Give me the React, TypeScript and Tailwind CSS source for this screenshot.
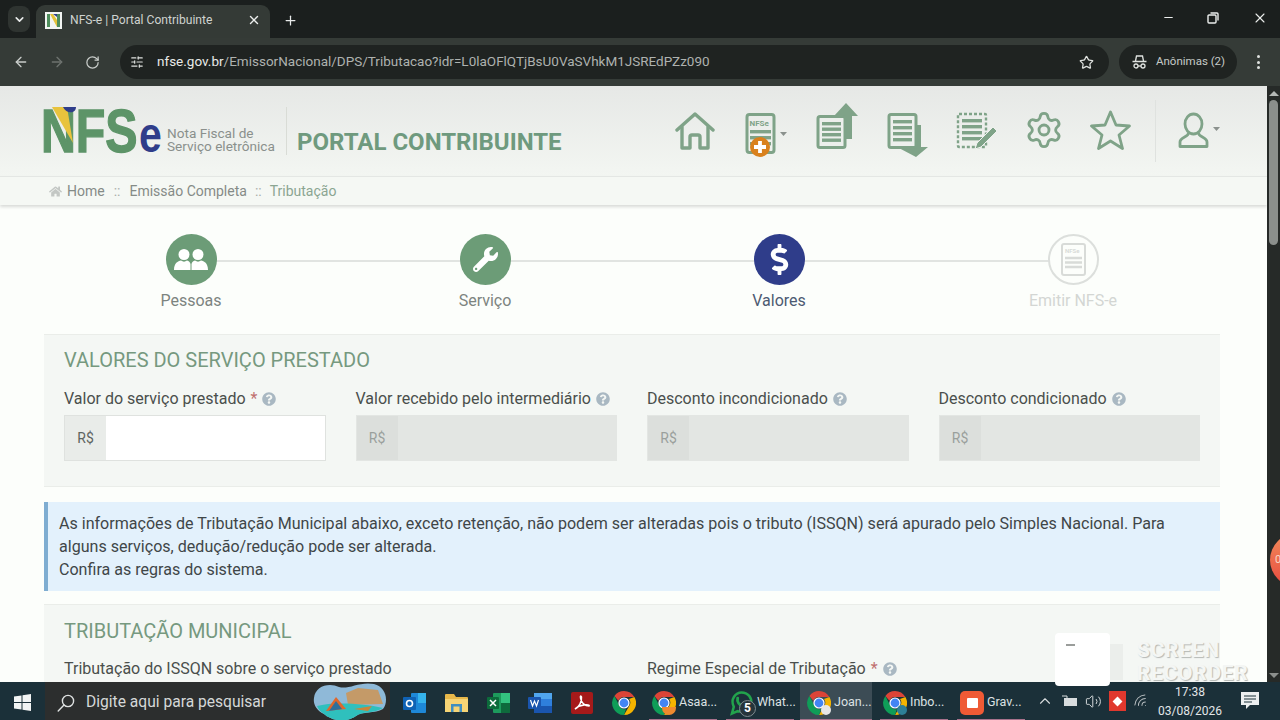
import { ChevronDown, X, Plus, Minus, ArrowLeft, ArrowRight, RotateCw, SlidersHorizontal, Star, Settings, ChevronUp, Volume2, Wifi } from "lucide-react";
import { FaDollarSign, FaHome, FaQuestionCircle, FaWrench } from "react-icons/fa";

const green = "#7fa388";

function Help() {
  return <FaQuestionCircle className="ml-[5px] inline-block h-[14px] w-[14px] text-[#a9b8c2]" />;
}

function Field({ label, required, enabled }: { label: string; required?: boolean; enabled?: boolean }) {
  return (
    <div>
      <div className="flex h-[24px] items-center text-[16px] text-[#4a4f4c]">
        {label}
        {required && <span className="ml-[5px] text-[#c0706f]">*</span>}
        <Help />
      </div>
      <div className={`mt-[4px] flex h-[46px] border ${enabled ? "border-[#dfe2df] bg-white" : "border-[#e3e6e3] bg-[#e3e6e3]"}`}>
        <div className={`flex w-[41px] items-center justify-center text-[14px] ${enabled ? "bg-[#e9ece9] text-[#5e6461]" : "bg-[#dcdfdc] text-[#9a9f9c]"}`}>R$</div>
      </div>
    </div>
  );
}

function Step({ label, state, children }: { label: string; state: "done" | "current" | "todo"; children: React.ReactNode }) {
  const circle =
    state === "done"
      ? "bg-[#6c9c77] text-white"
      : state === "current"
        ? "bg-[#2f3d8a] text-white"
        : "border-2 border-[#dcdfdc] bg-[#fcfefb]";
  const text = state === "done" ? "text-[#7c8480]" : state === "current" ? "text-[#4c5a72]" : "text-[#d3d6d3]";
  return (
    <div className="relative z-10 flex w-[294px] flex-col items-center">
      <div className={`flex h-[51px] w-[51px] items-center justify-center rounded-full ${circle}`}>{children}</div>
      <div className={`mt-[5px] text-[16px] leading-[22px] ${text}`}>{label}</div>
    </div>
  );
}

function DocLines({ x, y, w, n = 4, gap = 6 }: { x: number; y: number; w: number; n?: number; gap?: number }) {
  return (
    <>
      {Array.from({ length: n }).map((_, i) => (
        <rect key={i} x={x} y={y + i * gap} width={w} height={3.4} fill={green} />
      ))}
    </>
  );
}

function HeaderIcons() {
  return (
    <div className="ml-auto flex items-center">
      {/* home */}
      <svg width="40" height="60" viewBox="0 0 40 60" fill="none" stroke={green} strokeWidth="3.4" strokeLinejoin="round" strokeLinecap="round">
        <path d="M2 29 20 13 38 29" />
        <path d="M7 26V47H15V36a2 2 0 0 1 2-2h6a2 2 0 0 1 2 2V47H33V26" />
      </svg>
      {/* nfs-e new */}
      <svg className="ml-[30px]" width="45" height="60" viewBox="0 0 45 60" fill="none">
        <rect x="2" y="13.5" width="27" height="38" rx="2.5" stroke={green} strokeWidth="3" />
        <text x="4.5" y="25" fontSize="8" fontWeight="700" fontFamily="Roboto, sans-serif" fill={green}>NFSe</text>
        <DocLines x={5} y={29} w={21} n={3} gap={6} />
        <circle cx="15" cy="46" r="10" fill="#d9811d" />
        <path d="M15 40v12M9 46h12" stroke="#fff" strokeWidth="3.8" />
        <path d="M35 31h7l-3.5 4z" fill="#8b918d" />
      </svg>
      {/* send */}
      <svg className="ml-[26px]" width="42" height="60" viewBox="0 0 42 60" fill="none">
        <path d="M30 2 42 15H36V38H24V15H18z" fill={green} />
        <rect x="2" y="15.5" width="27" height="31" rx="2" fill="#ecefec" stroke={green} strokeWidth="3" />
        <DocLines x={6} y={21} w={19} n={4} gap={5.5} />
      </svg>
      {/* receive */}
      <svg className="ml-[29px]" width="42" height="60" viewBox="0 0 42 60" fill="none">
        <path d="M21 24H34V46H41L29 56 10 46H21z" fill={green} />
        <rect x="2" y="13.5" width="27" height="33" rx="2" fill="#edf0ed" stroke={green} strokeWidth="3" />
        <DocLines x={6} y={19} w={19} n={4} gap={6} />
      </svg>
      {/* edit */}
      <svg className="ml-[27px]" width="41" height="60" viewBox="0 0 41 60" fill="none">
        <rect x="2" y="13" width="28" height="33" rx="1" stroke={green} strokeWidth="2.4" strokeDasharray="3 2" />
        <DocLines x={6} y={18} w={20} n={4} gap={6} />
        <path d="M37 26 41 30 25 46 19 48 21 42z" fill={green} stroke="#eef1ee" strokeWidth="1" />
      </svg>
      <div className="ml-[27px] flex h-[60px] w-[40px] items-start pt-[9px]">
        <Settings size={40} strokeWidth={1.7} color={green} />
      </div>
      {/* favourites */}
      <svg className="ml-[26px]" width="41" height="60" viewBox="0 0 41 60" fill="none">
        <path d="M20.5 11 26 24 39.5 25 29 34 32.5 47.5 20.5 40 8.5 47.5 12 34 1.5 25 15 24z" stroke={green} strokeWidth="2.8" strokeLinejoin="round" />
      </svg>
      <div className="ml-[24px] h-[62px] w-px bg-[#dfe2df]" />
      {/* user */}
      <svg className="ml-[22px]" width="42" height="60" viewBox="0 0 42 60" fill="none" stroke={green} strokeWidth="2.8">
        <ellipse cx="15.5" cy="23" rx="8.5" ry="10" />
        <path d="M10.5 32C10.5 36 2 36 2 41V45.5H29V41C29 36 20.5 36 20.5 32" strokeLinejoin="round" />
        <path d="M35 26h7l-3.5 4z" fill="#8b918d" stroke="none" />
      </svg>
    </div>
  );
}

function Logo() {
  return (
    <div className="flex items-center">
      <svg className="overflow-visible" width="120" height="60" viewBox="0 0 120 60">
        <text transform="scale(0.78 1)" x="-4" y="51" fontFamily="'Liberation Sans', sans-serif" fontWeight="700" fontSize="62" fill="#5d9468" stroke="#5d9468" strokeWidth="1.4">NFS</text>
        <path d="M8 6H23L29 42z" fill="#e8c33d" />
        <path d="M19 6H32C32 13 22 13 19 6z" fill="#2f3d8a" />
        <text transform="scale(0.82 1)" x="116" y="51" fontFamily="'Liberation Sans', sans-serif" fontWeight="700" fontSize="50" fill="#2f3d8a">e</text>
      </svg>
      <div className="mt-[18px] ml-[3px] w-[118px] text-[13.6px] leading-[13.5px] whitespace-nowrap text-[#8a908c]">
        Nota Fiscal de
        <br />
        Serviço eletrônica
      </div>
      <div className="ml-[1px] h-[48px] w-px bg-[#d9dcd6]" />
      <div className="mt-[21px] ml-[10px] text-[24px] leading-[28px] font-bold text-[#6f9a7e]">PORTAL CONTRIBUINTE</div>
    </div>
  );
}

function Chrome({ size = 22, children }: { size?: number; children?: React.ReactNode }) {
  return (
    <div className="relative shrink-0" style={{ width: size, height: size }}>
      <svg width={size} height={size} viewBox="0 0 24 24">
        <path d="M12 0a12 12 0 0 1 10.4 6H12a6 6 0 0 0-5.6 3.8L2.4 5A12 12 0 0 1 12 0z" fill="#dc4437" />
        <path d="M22.4 6A12 12 0 0 1 12 24l5.2-9A6 6 0 0 0 17 8z" fill="#f4b400" />
        <path d="M12 24A12 12 0 0 1 2.4 5l4.8 9.5A6 6 0 0 0 14 18z" fill="#0f9d58" />
        <circle cx="12" cy="12" r="5.6" fill="#fff" />
        <circle cx="12" cy="12" r="4.4" fill="#4285f4" />
      </svg>
      {children}
    </div>
  );
}

function TaskItem({ label, width, margin, active, icon }: { label: string; width: string; margin: string; active?: boolean; icon: React.ReactNode }) {
  return (
    <div className={`relative flex h-full items-center gap-[3px] pt-[3px] ${width} ${margin} ${active ? "bg-[#3c4c55] pl-[7px]" : "pl-[3px]"}`}>
      {icon}
      <span className="text-[12.5px] text-[#dde2e4]">{label}</span>
      <div className="absolute right-0 bottom-0 left-0 h-[1.5px] bg-[#a8728c]" />
    </div>
  );
}

function Taskbar() {
  return (
    <div className="flex h-[38px] shrink-0 items-center bg-[#1b3039]">
      <div className="flex h-full w-[45px] items-center justify-center pt-[3px]">
        <svg width="17" height="17" viewBox="0 0 17 17" fill="#f2f4f4">
          <path d="M0 2.5 7.5 1.4V8H0zM8.5 1.3 17 0V8H8.5zM0 9H7.5V15.6L0 14.5zM8.5 9H17V17L8.5 15.7z" />
        </svg>
      </div>
      <div className="flex h-full w-[345px] items-center overflow-hidden bg-[#2c2e2e]">
        <svg className="mt-[3px] ml-[12px]" width="18" height="18" viewBox="0 0 18 18" fill="none" stroke="#dfe2e2" strokeWidth="1.4">
          <circle cx="11" cy="7" r="5.6" />
          <path d="M7 11 1.2 17" strokeLinecap="round" />
        </svg>
        <span className="mt-[3px] ml-[11px] text-[15.6px] text-[#d5d8d8]">Digite aqui para pesquisar</span>
        <svg className="ml-[46px]" width="76" height="38" viewBox="0 0 76 38">
          <path d="M2 16C3 4 17 0 27 5 36 8 48-1 62 2 74 5 77 19 71 27 63 32 50 29 44 34 34 41 20 39 12 32 4 28 1 22 2 16z" fill="#8fb9d8" />
          <path d="M34 11 46 6 66 8 71 22 36 23z" fill="#c49a68" />
          <path d="M5 24C20 20 50 21 71 26 62 32 50 29 44 34 34 41 20 39 12 32 8 29 6 27 5 24z" fill="#2fc0bd" />
          <path d="M14 29 24 15 34 27z" fill="#e0672c" />
          <path d="M17 29 24 19 30 27z" fill="#2f6f9c" />
          <path d="M42 27 60 24 56 29z" fill="#c9853a" />
        </svg>
      </div>
      <div className="ml-[3px] flex h-full items-center pt-[3px]">
        <div className="flex w-[42px] justify-center">
          <svg width="23" height="22" viewBox="0 0 23 22">
            <rect x="8" y="1" width="15" height="20" rx="1" fill="#1e88d8" />
            <rect x="15" y="1" width="8" height="10" fill="#35b3ec" />
            <rect x="0" y="5" width="13" height="13" rx="1" fill="#0f62b5" />
            <circle cx="6.5" cy="11.5" r="3" fill="none" stroke="#fff" strokeWidth="1.6" />
          </svg>
        </div>
        <div className="flex w-[42px] justify-center">
          <svg width="23" height="20" viewBox="0 0 23 20">
            <path d="M0 2a1 1 0 0 1 1-1H9L11 4H22a1 1 0 0 1 1 1V19H0z" fill="#e8b84a" />
            <rect x="0" y="6" width="23" height="13" fill="#f6d475" />
            <rect x="6" y="11" width="11" height="8" fill="#3f8ec0" />
            <rect x="8.5" y="13.5" width="6" height="5.5" fill="#f6d475" />
          </svg>
        </div>
        <div className="flex w-[42px] justify-center">
          <svg width="23" height="22" viewBox="0 0 23 22">
            <rect x="6" y="1" width="17" height="20" rx="1" fill="#1d9a5c" />
            <rect x="14" y="1" width="9" height="10" fill="#33c27f" />
            <rect x="14" y="11" width="9" height="10" fill="#0e6a3c" />
            <rect x="0" y="5" width="12" height="12" rx="1" fill="#0c6b3b" />
            <path d="M3 8 9 14M9 8 3 14" stroke="#fff" strokeWidth="1.5" />
          </svg>
        </div>
        <div className="flex w-[42px] justify-center">
          <svg width="24" height="22" viewBox="0 0 24 22">
            <rect x="6" y="1" width="18" height="20" rx="1" fill="#2f7fdc" />
            <rect x="6" y="1" width="18" height="6" fill="#51a6ee" />
            <rect x="6" y="14" width="18" height="7" fill="#1a55ae" />
            <rect x="0" y="5" width="13" height="12" rx="1" fill="#1a55ae" />
            <path d="M2.5 8 4.5 14 6.5 9 8.5 14 10.5 8" fill="none" stroke="#fff" strokeWidth="1.2" />
          </svg>
        </div>
        <div className="flex w-[42px] justify-center">
          <svg width="22" height="22" viewBox="0 0 22 22">
            <rect width="22" height="22" rx="2" fill="#a51a1a" />
            <path d="M4 17C8 15 11 10 10.5 5 10 3.5 9 4 9.5 6 10.5 11 14 14 18 14 19 13 16 12.5 13 13 9.5 13.5 6 15 4 17z" fill="none" stroke="#fff" strokeWidth="1.5" />
          </svg>
        </div>
        <div className="flex w-[42px] justify-center">
          <Chrome size={24} />
        </div>
      </div>
      <TaskItem label="Asaa..." width="w-[68px]" margin="ml-[4px]" icon={<Chrome size={24}><div className="absolute right-0 bottom-0 h-[8px] w-[14px] rounded-b-full bg-[#ef8a2f]" /></Chrome>} />
      <TaskItem
        label="What..."
        width="w-[68px]"
        margin="ml-[9px]"
        icon={
          <div className="relative h-[26px] w-[25px] shrink-0">
            <svg width="25" height="26" viewBox="0 0 26 26" fill="none">
              <path d="M3 24 5 17C1 9 7 2 13 2 20 2 24 8 23 13 22 19 15 23 9 21.5z" stroke="#22a34c" strokeWidth="2.6" />
              <path d="M9 8C8 12 11 15 14 16" stroke="#22a34c" strokeWidth="3" strokeLinecap="round" />
            </svg>
            <div className="absolute -right-[2px] -bottom-[1px] flex h-[17px] w-[17px] items-center justify-center rounded-full border border-[#7d8a90] bg-[#26343a] text-[12px] font-bold text-white">5</div>
          </div>
        }
      />
      <TaskItem label="Joan..." width="w-[72px]" margin="ml-[6px]" active icon={<Chrome size={24}><div className="absolute right-0 bottom-0 h-[10px] w-[10px] rounded-full bg-[#e6e6e6]" /></Chrome>} />
      <TaskItem label="Inbo..." width="w-[68px]" margin="ml-[8px]" icon={<Chrome size={24}><div className="absolute right-0 bottom-0 h-[10px] w-[10px] rounded-full bg-[#2d7f97]" /></Chrome>} />
      <TaskItem
        label="Grav..."
        width="w-[68px]"
        margin="ml-[9px]"
        icon={
          <div className="flex h-[24px] w-[24px] shrink-0 items-center justify-center rounded-[5px] bg-[#ef5a35]">
            <div className="h-[10px] w-[11px] rounded-[1px] bg-white" />
          </div>
        }
      />
      <div className="ml-[11px] flex h-full items-center">
        <ChevronUp size={18} color="#d8dcde" strokeWidth={1.5} />
        <svg className="ml-[7px]" width="17" height="12" viewBox="0 0 17 12">
          <rect x="3" y="3" width="13" height="8" fill="#d8dcde" />
          <path d="M1 1h5v2" stroke="#d8dcde" fill="none" />
        </svg>
        <Volume2 className="ml-[7px]" size={17} color="#d8dcde" strokeWidth={1.4} />
        <div className="ml-[7px] flex h-[20px] w-[17px] items-center justify-center bg-[#e0382e]">
          <div className="h-[7px] w-[7px] rotate-45 bg-white" />
        </div>
        <Wifi className="ml-[7px] rotate-[-45deg]" size={17} color="#b9bfc2" strokeWidth={1.4} />
      </div>
      <div className="flex w-[80px] flex-col items-center pt-[2px] text-[12px] leading-[19px] text-[#e3e6e8]">
        <span>17:38</span>
        <span>03/08/2026</span>
      </div>
      <div className="ml-[10px] flex w-[20px] justify-center">
        <svg width="18" height="18" viewBox="0 0 18 18">
          <path d="M0 0H18V13H9L5 17V13H0z" fill="#eceff0" />
          <path d="M3 4H15M3 7H15M3 10H11" stroke="#1b3039" strokeWidth="1" />
        </svg>
      </div>
    </div>
  );
}

export default function App() {
  return (
    <div className="relative flex h-[720px] w-[1280px] flex-col overflow-hidden bg-[#fcfefb] font-['Roboto',sans-serif]">
      {/* tab strip */}
      <div className="flex h-[38px] shrink-0 items-end bg-[#1b1f1e] pl-[8px]">
        <div className="mb-[6px] flex h-[26px] w-[22px] items-center justify-center rounded-[8px] bg-[#2f3431]">
          <ChevronDown size={13} color="#e8eaea" strokeWidth={3} />
        </div>
        <div className="ml-[6px] flex h-[33px] w-[234px] items-center rounded-t-[9px] bg-[#343a36] pr-[9px] pb-[3px] pl-[9px]">
          <svg width="17" height="17" viewBox="0 0 17 17">
            <rect width="17" height="17" fill="#f2f4f2" />
            <path d="M2 2H5V15H2zM12 2H15V15H12z" fill="#4e8d5c" />
            <path d="M5 2 12 15V8L8 2z" fill="#e5c23a" />
            <path d="M8 2H12V5z" fill="#2f3d8a" />
          </svg>
          <span className="ml-[8px] text-[12.1px] whitespace-nowrap text-[#cfd3d0]">NFS-e | Portal Contribuinte</span>
          <X className="ml-auto" size={14} color="#eceeed" strokeWidth={2.4} />
        </div>
        <div className="ml-[13px] flex h-[33px] items-center pb-[3px]">
          <Plus size={15} color="#e8eaea" strokeWidth={2} />
        </div>
        <div className="mb-[4px] ml-auto flex h-[33px] items-center">
          <Minus size={13} color="#eceeed" strokeWidth={2} />
          <svg className="ml-[32px]" width="12" height="12" viewBox="0 0 12 12" fill="none" stroke="#eceeed" strokeWidth="1.4">
            <rect x="1" y="3" width="8" height="8" rx="1" />
            <path d="M3.5 1H10a1 1 0 0 1 1 1V8.5" />
          </svg>
          <X className="mr-[12px] ml-[33px]" size={16} color="#eceeed" strokeWidth={1.6} />
        </div>
      </div>

      {/* toolbar */}
      <div className="flex h-[48px] shrink-0 items-center bg-[#353b37]">
        <ArrowLeft className="ml-[13px]" size={16} color="#c9cdca" strokeWidth={2} />
        <ArrowRight className="ml-[20px]" size={16} color="#6e736f" strokeWidth={2} />
        <RotateCw className="ml-[20px]" size={15} color="#c9cdca" strokeWidth={2} />
        <div className="ml-[20px] flex h-[34px] w-[989px] items-center rounded-full bg-[#1f2321]">
          <div className="ml-[4px] flex h-[26px] w-[26px] items-center justify-center">
            <SlidersHorizontal size={14} color="#dfe2df" strokeWidth={2} />
          </div>
          <div className="mb-[1px] ml-[7px] text-[13.5px] whitespace-nowrap">
            <span className="text-[#e8eae8]">nfse.gov.br</span>
            <span className="text-[#aeb2af]">/EmissorNacional/DPS/Tributacao?idr=L0laOFlQTjBsU0VaSVhkM1JSREdPZz090</span>
          </div>
          <Star className="mr-[15px] ml-auto" size={15} color="#dfe2df" strokeWidth={2} />
        </div>
        <div className="ml-[10px] flex h-[34px] w-[118px] items-center rounded-full bg-[#1f2321] pl-[13px]">
          <svg width="15" height="14" viewBox="0 0 15 14" fill="none" stroke="#dfe2df" strokeWidth="1.3">
            <path d="M3.5 6 4.5 1H10.5L11.5 6M0.5 6.5H14.5" />
            <circle cx="4" cy="11" r="2" />
            <circle cx="11" cy="11" r="2" />
            <path d="M6 11H9" />
          </svg>
          <span className="ml-[9px] text-[11.5px] text-[#c6cac7]">Anônimas (2)</span>
        </div>
        <div className="ml-[20px] flex flex-col gap-[2.5px]">
          <div className="h-[3px] w-[3px] rounded-full bg-[#dfe2df]" />
          <div className="h-[3px] w-[3px] rounded-full bg-[#dfe2df]" />
          <div className="h-[3px] w-[3px] rounded-full bg-[#dfe2df]" />
        </div>
      </div>

      <div className="flex min-h-0 flex-1">
        {/* page */}
        <div className="min-w-0 flex-1 overflow-hidden">
          <div className="flex h-[90px] items-center bg-gradient-to-b from-[#e6e8e6] to-[#f3f6f2] pr-[47px] pl-[44px]">
            <Logo />
            <HeaderIcons />
          </div>
          <div className="flex h-[29px] items-center border-t border-[#e4e7e4] bg-[#f5f8f4] pl-[49px] text-[14px] text-[#858b87] shadow-[0_2px_3px_rgba(0,0,0,0.14)]">
            <FaHome className="h-[13px] w-[13px] text-[#c3c7c4]" />
            <span className="ml-[5px]">Home</span>
            <span className="mx-[9px] text-[#a9aeab]">::</span>
            <span>Emissão Completa</span>
            <span className="mx-[8px] text-[#a9aeab]">::</span>
            <span className="text-[#8ba592]">Tributação</span>
          </div>

          {/* stepper */}
          <div className="relative mt-[29px] ml-[44px] flex w-[1176px]">
            <div className="absolute top-[26px] left-[147px] h-[2px] w-[882px] bg-[#e1e4e1]" />
            <Step label="Pessoas" state="done">
              <svg width="34" height="24" viewBox="0 0 34 24" fill="#fff">
                <circle cx="10" cy="6.5" r="5.5" />
                <circle cx="24" cy="6.5" r="5.5" />
                <path d="M0 22C0 15 4 13 7 12.5 9 14 11 14 13 12.5 15 13 16 14 16.5 16V22z" />
                <path d="M17.5 22V16C18 14 19 13 21 12.5 23 14 25 14 27 12.5 30 13 34 15 34 22z" />
              </svg>
            </Step>
            <Step label="Serviço" state="done">
              <FaWrench className="h-[25px] w-[25px]" />
            </Step>
            <Step label="Valores" state="current">
              <FaDollarSign className="h-[31px] w-[31px]" />
            </Step>
            <Step label="Emitir NFS-e" state="todo">
              <svg width="25" height="33" viewBox="0 0 25 33" fill="none">
                <rect x="1" y="1" width="23" height="31" rx="2" stroke="#d8dbd8" strokeWidth="2" />
                <text x="4" y="10" fontSize="6" fontWeight="700" fontFamily="Roboto, sans-serif" fill="#d8dbd8">NFSe</text>
                <path d="M4 15H21M4 19.5H21M4 24H21" stroke="#d8dbd8" strokeWidth="2.4" />
              </svg>
            </Step>
          </div>

          {/* valores */}
          <section className="mt-[22px] ml-[44px] h-[153px] w-[1176px] border-t border-b border-[#eaede9] bg-[#f4f7f4] px-[20px] pt-[12px]">
            <h2 className="text-[20px] leading-[26px] text-[#76997f] uppercase">Valores do serviço prestado</h2>
            <div className="mt-[14px] grid grid-cols-4 gap-x-[30px]">
              <Field label="Valor do serviço prestado" required enabled />
              <Field label="Valor recebido pelo intermediário" />
              <Field label="Desconto incondicionado" />
              <Field label="Desconto condicionado" />
            </div>
          </section>

          {/* aviso */}
          <div className="mt-[15px] ml-[44px] h-[89px] w-[1176px] border-l-[4px] border-[#7fadd1] bg-[#e3f1fc] pt-[10px] pr-[40px] pl-[11px] text-[16.07px] leading-[23px] text-[#3f4648]">
            As informações de Tributação Municipal abaixo, exceto retenção, não podem ser alteradas pois o tributo (ISSQN) será apurado pelo Simples Nacional. Para alguns serviços, dedução/redução pode ser alterada.
            <br />
            Confira as regras do sistema.
          </div>

          {/* tributacao */}
          <section className="mt-[13px] ml-[44px] h-[100px] w-[1176px] border-t border-[#eaede9] bg-[#f4f7f4] px-[20px] pt-[13px]">
            <h2 className="text-[20px] leading-[26px] text-[#76997f] uppercase">Tributação municipal</h2>
            <div className="mt-[13px] grid grid-cols-2 gap-x-[30px]">
              <div className="flex h-[24px] items-center text-[16px] text-[#4a4f4c]">Tributação do ISSQN sobre o serviço prestado</div>
              <div className="flex h-[24px] items-center text-[16px] text-[#4a4f4c]">
                Regime Especial de Tributação
                <span className="ml-[5px] text-[#c0706f]">*</span>
                <Help />
              </div>
            </div>
          </section>
        </div>

        {/* scrollbar */}
        <div className="flex w-[13px] shrink-0 flex-col items-center bg-[#262a28] pt-[5px]">
          <div className="h-0 w-0 border-x-[5px] border-b-[5px] border-x-transparent border-b-[#b4b8b5]" />
          <div className="mt-[4px] h-[145px] w-[9px] rounded-full bg-[#8b8f8c]" />
          <div className="mt-auto mb-[4px] h-0 w-0 border-x-[5px] border-t-[5px] border-x-transparent border-t-[#8b8f8c]" />
        </div>
      </div>

      <Taskbar />

      {/* floating overlays of the screen recorder */}
      <div className="absolute top-[533px] left-[1270px] flex h-[54px] w-[54px] items-center rounded-full bg-gradient-to-b from-[#f08a5a] to-[#e8473f] pl-[5px] text-[11px] text-[#f8d7c8]">0</div>
      <div className="absolute top-[644px] left-[1110px] h-[36px] w-[13px] bg-[#ebeeeb]" />
      <div className="absolute top-[633px] left-[1055px] h-[53px] w-[55px] rounded-[4px] bg-white">
        <div className="mt-[11px] ml-[11px] h-[2px] w-[9px] bg-[#9a9d9b]" />
      </div>
      <div className="absolute top-[639px] left-[1137px] text-[21px] leading-[23px] font-bold tracking-[0.7px] text-[#f4f6f4] [text-shadow:1px_1px_1px_#b5b8b5]">
        SCREEN
        <br />
        RECORDER
      </div>
    </div>
  );
}
